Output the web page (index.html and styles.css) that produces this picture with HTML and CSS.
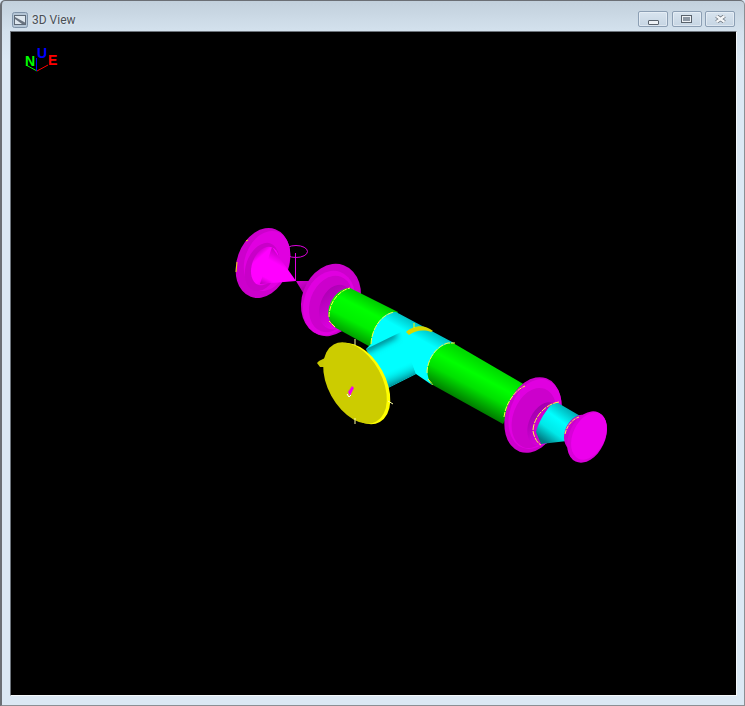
FILE: index.html
```html
<!DOCTYPE html>
<html lang="en">
<head>
<meta charset="utf-8">
<title>3D View</title>
<link rel="stylesheet" href="styles.css">
</head>
<body>
<div class="window">
  <div class="titlebar">
    <svg class="app-icon" viewBox="0 0 16 16" width="16" height="16">
      <rect x="0.5" y="0.5" width="15" height="15" rx="2" fill="#b4c5d5" stroke="#7f93a8"/>
      <rect x="2.5" y="3.500" width="11" height="9" fill="#dfe8ef" stroke="#5f6b78"/>
      <path d="M3 5 L13 10.500 L13 12 L10 12 L3 7 Z" fill="#6a7480"/>
    </svg>
    <span class="title">3D View</span>
    <div class="controls">
      <div class="ctl"><span class="glyph-min"></span></div>
      <div class="ctl"><span class="glyph-max"></span></div>
      <div class="ctl"><svg class="glyph-close" viewBox="0 0 11 8" width="11" height="8"><path d="M1.500 1 L9.500 7 M9.500 1 L1.500 7" stroke="#6a737d" stroke-width="4"/><path d="M1.500 1 L9.500 7 M9.500 1 L1.500 7" stroke="#f4f6f8" stroke-width="2.400"/></svg></div>
    </div>
  </div>
  <div class="viewport">
    <svg class="scene" viewBox="11 32 725 663" width="725" height="663">
      <defs>
        <linearGradient id="g1" gradientUnits="userSpaceOnUse" x1="352" y1="287" x2="330" y2="330">
          <stop offset="0" stop-color="#00c400"/><stop offset=".3" stop-color="#00ff00"/><stop offset=".62" stop-color="#00f000"/><stop offset="1" stop-color="#008a00"/>
        </linearGradient>
        <linearGradient id="g2" gradientUnits="userSpaceOnUse" x1="524" y1="385" x2="503" y2="424">
          <stop offset="0" stop-color="#00dc00"/><stop offset=".3" stop-color="#00ff00"/><stop offset=".6" stop-color="#00e000"/><stop offset="1" stop-color="#007a00"/>
        </linearGradient>
        <linearGradient id="c1" gradientUnits="userSpaceOnUse" x1="420" y1="325" x2="410" y2="343">
          <stop offset="0" stop-color="#00c4c8"/><stop offset=".6" stop-color="#00ffff"/>
        </linearGradient>
        <linearGradient id="c2" gradientUnits="userSpaceOnUse" x1="388" y1="352" x2="401" y2="382">
          <stop offset="0" stop-color="#00ffff" stop-opacity="0"/><stop offset=".55" stop-color="#00f0f0" stop-opacity="0"/><stop offset="1" stop-color="#008c94"/>
        </linearGradient>
        <linearGradient id="c3" gradientUnits="userSpaceOnUse" x1="576" y1="410" x2="550" y2="446">
          <stop offset="0" stop-color="#009ca4"/><stop offset=".4" stop-color="#00ffff"/><stop offset=".7" stop-color="#00e8e8"/><stop offset="1" stop-color="#007c84"/>
        </linearGradient>
        <linearGradient id="m1" gradientUnits="userSpaceOnUse" x1="283" y1="250" x2="262" y2="288">
          <stop offset="0" stop-color="#b000b0"/><stop offset=".35" stop-color="#ff00ff"/><stop offset=".75" stop-color="#ff00ff"/><stop offset="1" stop-color="#a000a0"/>
        </linearGradient>
        <linearGradient id="m2" gradientUnits="userSpaceOnUse" x1="300" y1="282" x2="308" y2="298">
          <stop offset="0" stop-color="#d000d0"/><stop offset="1" stop-color="#840084"/>
        </linearGradient>
        <linearGradient id="m3" gradientUnits="userSpaceOnUse" x1="350" y1="285" x2="320" y2="330">
          <stop offset="0" stop-color="#f000f0"/><stop offset="1" stop-color="#a000a8"/>
        </linearGradient>
        <linearGradient id="m4" gradientUnits="userSpaceOnUse" x1="556" y1="402" x2="530" y2="444">
          <stop offset="0" stop-color="#e800e8"/><stop offset="1" stop-color="#9800a4"/>
        </linearGradient>
        <linearGradient id="y1" gradientUnits="userSpaceOnUse" x1="370" y1="350" x2="380" y2="420">
          <stop offset="0" stop-color="#ffff00"/><stop offset=".65" stop-color="#ffff00"/><stop offset="1" stop-color="#b0b000"/>
        </linearGradient>
        <filter id="soft" x="-20%" y="-50%" width="140%" height="200%"><feGaussianBlur stdDeviation="3"/></filter>
        <clipPath id="branch"><path d="M366 349 L401 332 L416 374 L386 389 Z"/></clipPath>
      </defs>

      <!-- left flange and cone -->
      <ellipse class="m-back" cx="263" cy="263" rx="36" ry="26" transform="rotate(110 263 263)"/>
      <ellipse class="m-face" cx="267" cy="261" rx="31" ry="22" transform="rotate(110 267 261)"/>
      <ellipse class="m-mid" cx="262" cy="267" rx="25" ry="16" transform="rotate(110 262 267)"/>
      <ellipse cx="265" cy="266" rx="20" ry="13" transform="rotate(110 265 266)" fill="url(#m1)"/>
      <path d="M260 284 L272 247 L296 281 Z" fill="url(#m1)"/>
      <ellipse cx="296" cy="251.500" rx="11.500" ry="6" fill="none" stroke="#e000e0" stroke-width="1"/>
      <path d="M295.500 253 V281" stroke="#e000e0" stroke-width="1" fill="none"/>
      <path d="M296 281 L311 281 L305 296 Z" fill="url(#m2)"/>
      <path d="M237 262 L236 272 M246 241 L248 240" stroke="#e6e600" stroke-width="1" fill="none"/>

      <!-- middle flange -->
      <ellipse class="m-back" cx="331" cy="300" rx="37" ry="29" transform="rotate(110 331 300)"/>
      <ellipse class="m-face" cx="329" cy="303" rx="33" ry="25" transform="rotate(110 329 303)"/>
      <ellipse class="m-back" cx="331" cy="304" rx="29" ry="21" transform="rotate(110 331 304)"/>
      <ellipse cx="336" cy="307" rx="23" ry="16" transform="rotate(110 336 307)" fill="url(#m3)"/>

      <!-- main pipe, upper part -->
      <path d="M350 288 L398 312 L376 350 L336 328 C328 322 326 312 331 302 C335 294 342 288 350 288 Z" fill="url(#g1)"/>
      <path d="M329 317 C329 303 338 291 350 288 M335 327 L329 321" fill="none" stroke="#ffff40" stroke-width="1" stroke-dasharray="5 1"/>

      <!-- tee body -->
      <path d="M392 312 L396 312 L454 343 L430 373 L432 385 L416 374 L386 389 L366 349 L371 344 C372 328 381 315 392 312 Z" fill="url(#c1)"/>
      <g clip-path="url(#branch)">
        <path d="M364 350 L396 334" stroke="#007c86" stroke-width="7" filter="url(#soft)"/>
        <path d="M366 349 L401 332 L416 374 L386 389 Z" fill="url(#c2)"/>
      </g>
      <path d="M371 344 C372 328 381 315 394 312" fill="none" stroke="#ffff40" stroke-width="1" stroke-dasharray="6 1"/>

      <!-- main pipe, lower part -->
      <path d="M453 343 L525 385 L503 424 L431 384 C424 372 428 360 436 351 C441 346 447 343 453 343 Z" fill="url(#g2)"/>
      <path d="M427 373 C427 360 436 346 448 343 L455 343 M428 379 L433 385" fill="none" stroke="#ffff40" stroke-width="1" stroke-dasharray="6 1"/>

      <!-- yellow clip on tee -->
      <path d="M406 332 C412 326 424 323 433 331 L431 332 C423 329 414 331 409 335 Z" fill="#d8d800"/>
      <path d="M414 323 V328" stroke="#ffff00" stroke-width="1"/>

      <!-- blind plate -->
      <path d="M319 361 L325 358 L326 367 L320 367 L317 363 Z" fill="#c8c800"/>
      <ellipse cx="358.500" cy="383.500" rx="44" ry="27" transform="rotate(61 358.500 383.500)" fill="url(#y1)"/>
      <ellipse cx="355" cy="383" rx="44" ry="27" transform="rotate(61 355 383)" fill="#cccc00"/>
      <path d="M355 339 V345 M355 418 V424 M388 401 L393 404" stroke="#ffffa0" stroke-width="1" fill="none"/>
      <path d="M348 392 L352 386 L354 388 L350 396 Z" fill="#f000f0"/>
      <path d="M347 394 L349 397 L351 395" stroke="#fff" stroke-width="1" fill="none"/>

      <!-- right big flange -->
      <ellipse class="m-back" cx="533" cy="415" rx="39" ry="27" transform="rotate(110 533 415)"/>
      <ellipse class="m-face" cx="535" cy="414" rx="36" ry="25" transform="rotate(110 535 414)"/>
      <ellipse class="m-back" cx="534" cy="418" rx="31" ry="21" transform="rotate(110 534 418)"/>
      <path d="M504 417 C506 401 517 389 525 386" fill="none" stroke="#ffff40" stroke-width="1" stroke-dasharray="5 1"/>
      <ellipse cx="544" cy="424" rx="23" ry="15" transform="rotate(115 544 424)" fill="url(#m4)"/>

      <!-- reducer -->
      <path d="M548 408 C551 404 555 403 558 403 L582 417 L567 441 L541 444 L533 430 C536 423 544 415 548 408 Z" fill="url(#c3)"/>
      <path d="M533 431 C534 420 543 408 550 405 L548 408 C543 415 538 424 536 432 L541 444 C537 442 534 437 533 431 Z" fill="#d000d0"/>
      <path d="M533 430 C534 417 545 404 559 402 M533 431 C534 437 537 443 541 445" fill="none" stroke="#ffff40" stroke-width="1" stroke-dasharray="6 1"/>

      <!-- right small flange -->
      <ellipse cx="579" cy="433" rx="19" ry="14" transform="rotate(115 579 433)" fill="#cc00cc"/>
      <ellipse cx="587" cy="437" rx="27" ry="18" transform="rotate(115 587 437)" fill="#d800d8"/>
      <ellipse cx="589" cy="436" rx="25" ry="16" transform="rotate(115 589 436)" fill="#ec00ec"/>
      <path d="M565 434 C567 425 573 419 579 417" fill="none" stroke="#ffff40" stroke-width="1" stroke-dasharray="4 1"/>

      <!-- compass -->
      <path d="M37 71 L26 65" stroke="#00ff00" stroke-width="1"/>
      <path d="M36.500 71 V58" stroke="#0000ff" stroke-width="1"/>
      <path d="M37 71 L48 65" stroke="#ff0000" stroke-width="1"/>
      <text class="axis axis-n" x="25" y="66">N</text>
      <text class="axis axis-u" x="37" y="58">U</text>
      <text class="axis axis-e" x="48" y="65">E</text>
    </svg>
  </div>
</div>
</body>
</html>
```

FILE: styles.css
```css
html, body {
  margin: 0;
  padding: 0;
  background: #dbe8f4;
}
.window {
  width: 745px;
  height: 706px;
  box-sizing: border-box;
  display: flex;
  flex-direction: column;
  border: 1px solid #6b6f75;
  border-left-width: 2px;
  border-radius: 5px 5px 0 0;
  border-bottom-color: #8b8f94;
  border-right-color: #8b8f94;
  background: linear-gradient(180deg, #c2d0dc 0, #d4e2ee 31px, #dbe8f4 60px);
  padding: 0 7px 9px 8px;
}
.titlebar {
  height: 30px;
  flex: none;
  display: flex;
  align-items: flex-start;
}
.app-icon {
  flex: none;
  margin: 11px 0 0 2px;
}
.title {
  margin: 11px 0 0 4px;
  font: 12px/16px Roboto, "Noto Sans", sans-serif;
  color: #4a4f55;
  text-shadow: 0 0 3px #eef5fb;
}
.controls {
  margin-left: auto;
  margin-top: 10px;
  margin-right: 2px;
  display: flex;
  gap: 3.5px;
}
.ctl {
  width: 28px;
  height: 14px;
  border: 1px solid #8c9fb4;
  border-radius: 2px;
  background: linear-gradient(180deg, #d8e4ef, #c6d5e3);
  box-shadow: inset 0 0 0 1px rgba(240, 246, 252, .55);
  display: flex;
  align-items: center;
  justify-content: center;
}
.glyph-min {
  display: block;
  width: 9px;
  height: 3px;
  margin-top: 6px;
  background: #eef2f6;
  border: 1px solid #59626c;
  border-radius: 1px;
}
.glyph-max {
  display: block;
  box-sizing: border-box;
  width: 11px;
  height: 8px;
  background: #8d98a4;
  border: 2px solid #eef2f6;
  outline: 1px solid #59626c;
  outline-offset: -1px;
}
.glyph-close {
  display: block;
}
.viewport {
  flex: 1;
  min-height: 0;
  background: #000;
  border: 1px solid;
  border-color: #6d747c #f4f8fb #f4f8fb #6d747c;
  overflow: hidden;
}
.scene {
  display: block;
}
.axis {
  font: bold 14px "Liberation Sans", Arial, sans-serif;
}
.axis-n { fill: #00ff00; }
.axis-u { fill: #0000ff; }
.axis-e { fill: #ff0000; }
.m-back { fill: #cc00cc; }
.m-face { fill: #e000e0; }
.m-mid { fill: #c800c8; }
```
